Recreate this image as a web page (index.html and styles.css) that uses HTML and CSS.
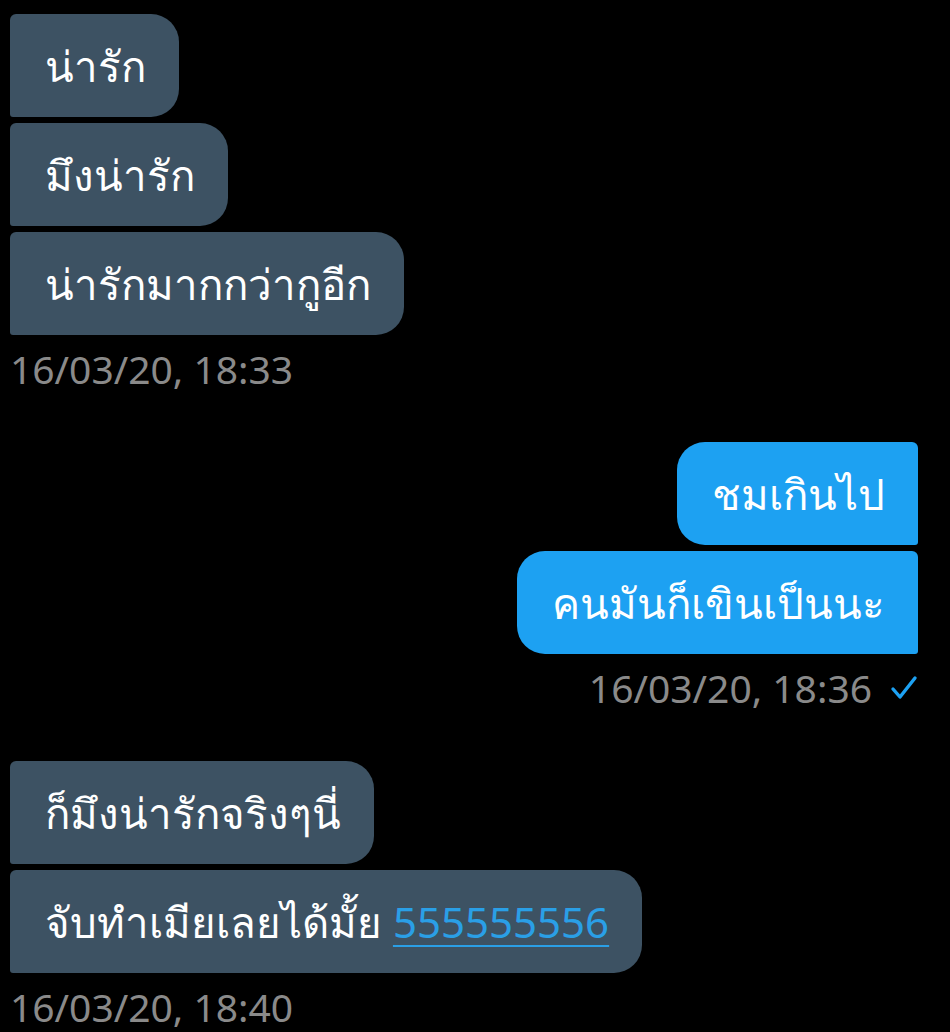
FILE: index.html
```html
<!DOCTYPE html>
<html>
<head>
  <title>Chat</title>
  <link rel="stylesheet" href="styles.css">
</head>
<body>
  <div class="chat">
    <div class="group in">
      <div class="bubble first">น่ารัก</div>
      <div class="bubble">มึงน่ารัก</div>
      <div class="bubble">น่ารักมากกว่ากูอีก</div>
      <div class="stamp">16/03/20, 18:33</div>
    </div>

    <div class="group out">
      <div class="bubble first">ชมเกินไป</div>
      <div class="bubble">คนมันก็เขินเป็นนะ</div>
      <div class="stamp">16/03/20, 18:36
        <svg class="tick" width="28" height="26" viewBox="0 0 28 26">
          <path d="M3 14 L10 22 L25 3" fill="none" stroke="#1da1f2" stroke-width="3.4" stroke-linecap="round" stroke-linejoin="round"/>
        </svg>
      </div>
    </div>

    <div class="group in">
      <div class="bubble first">ก็มึงน่ารักจริงๆนี่</div>
      <div class="bubble">จับทำเมียเลยได้มั้ย <a href="#" class="link">555555556</a></div>
      <div class="stamp">16/03/20, 18:40</div>
    </div>
  </div>
</body>
</html>
```

FILE: styles.css
```css
body { margin: 0; background: #000; font-family: "Noto Sans", "DejaVu Sans", sans-serif; }
.chat { padding: 14px 32px 0 10px; display: flex; flex-direction: column; gap: 53px; }
.group { display: flex; flex-direction: column; gap: 6px; }
.group.in { align-items: flex-start; }
.group.out { align-items: flex-end; }
.bubble { height: 103px; line-height: 103px; padding: 0 33px 0 35px; font-size: 42px; color: #fff; white-space: nowrap; }
.in .bubble { background: #3d5263; border-radius: 6px 28px 28px 3px; }
.out .bubble { background: #1da1f2; border-radius: 28px 6px 3px 28px; }
.stamp { margin-top: 8px; line-height: 40px; font-size: 39px; color: #8a8a8a; display: flex; align-items: center; gap: 18px; }
.tick { display: block; }
.link { color: #2a9fe6; text-decoration: underline; text-underline-offset: 7px; text-decoration-thickness: 2px; }
```
